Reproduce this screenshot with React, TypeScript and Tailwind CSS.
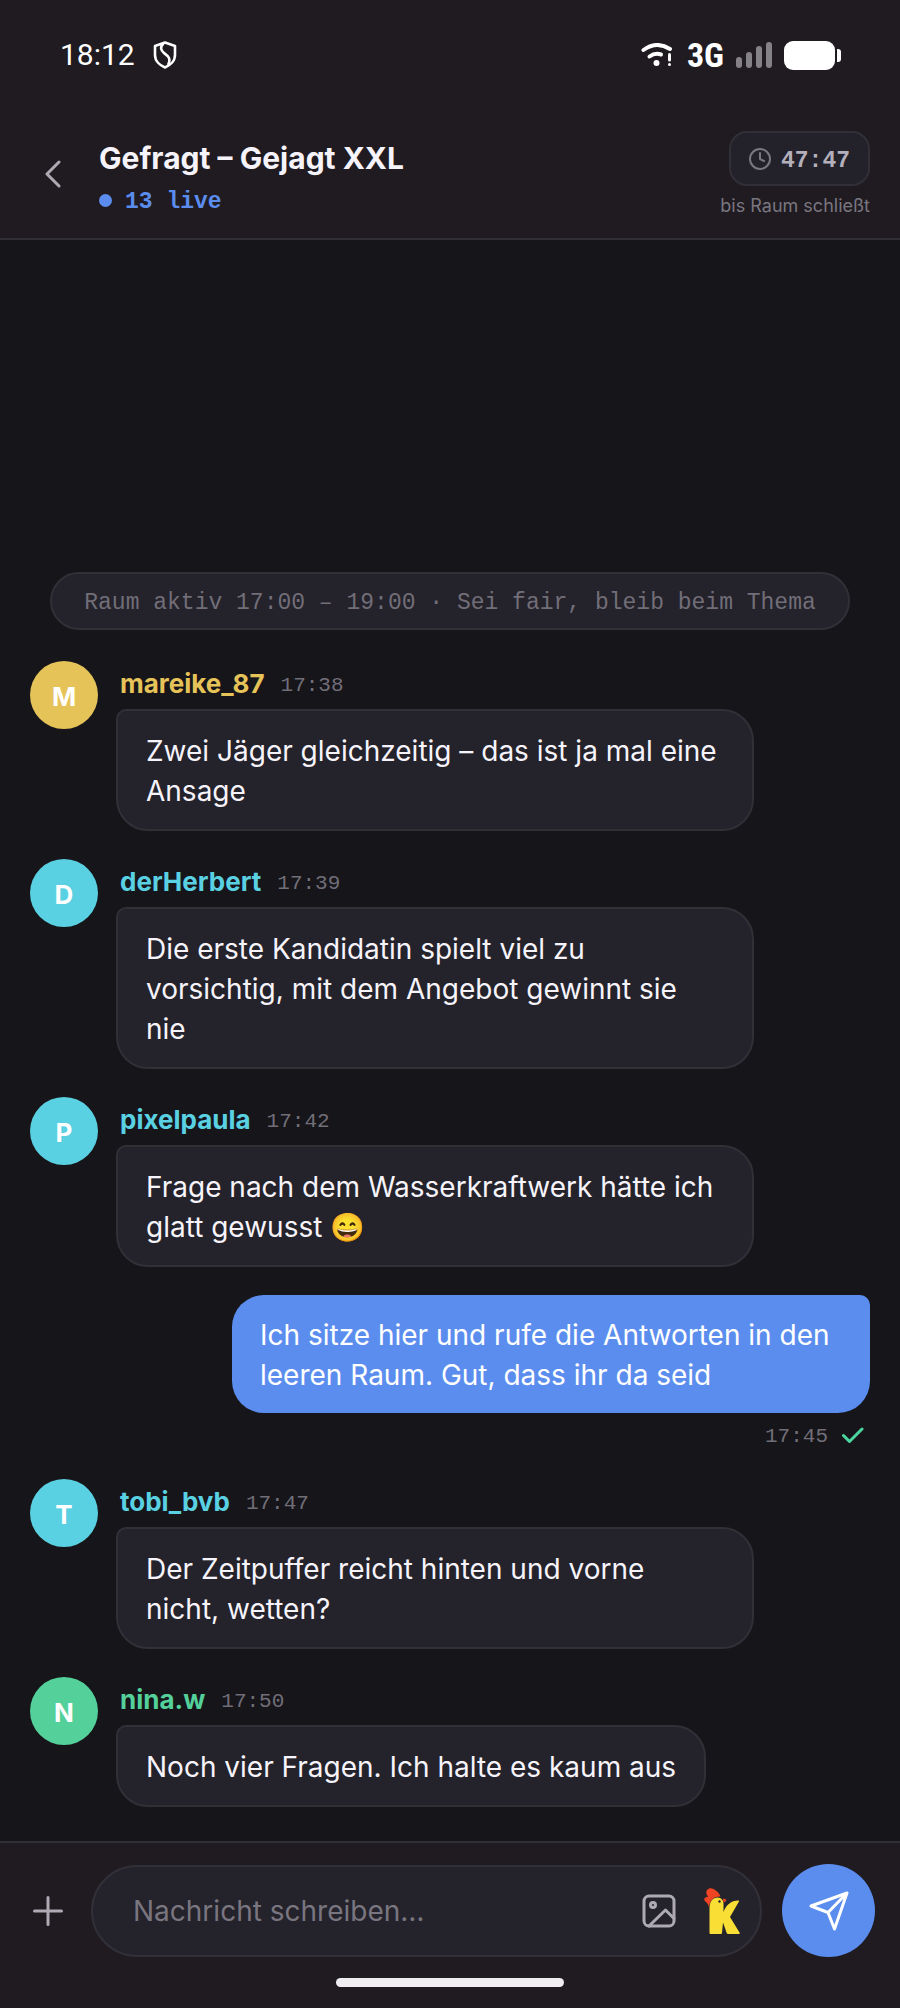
import React from 'react';

type ChatMessage = {
  id: number;
  author?: string;
  time: string;
  text: string;
  avatar?: string;
  name?: string;
};

const messages: ChatMessage[] = [
  { id: 1, author: 'mareike_87', time: '17:38', text: 'Zwei Jäger gleichzeitig – das ist ja mal eine Ansage', avatar: 'bg-[#e6c358]', name: 'text-[#e6c358]' },
  { id: 2, author: 'derHerbert', time: '17:39', text: 'Die erste Kandidatin spielt viel zu vorsichtig, mit dem Angebot gewinnt sie nie', avatar: 'bg-[#5ad1e2]', name: 'text-[#5ad1e2]' },
  { id: 3, author: 'pixelpaula', time: '17:42', text: 'Frage nach dem Wasserkraftwerk hätte ich glatt gewusst 😄', avatar: 'bg-[#5ad1e2]', name: 'text-[#5ad1e2]' },
  { id: 4, time: '17:45', text: 'Ich sitze hier und rufe die Antworten in den leeren Raum. Gut, dass ihr da seid' },
  { id: 5, author: 'tobi_bvb', time: '17:47', text: 'Der Zeitpuffer reicht hinten und vorne nicht, wetten?', avatar: 'bg-[#5ad1e2]', name: 'text-[#5ad1e2]' },
  { id: 6, author: 'nina.w', time: '17:50', text: 'Noch vier Fragen. Ich halte es kaum aus', avatar: 'bg-[#54d09a]', name: 'text-[#54d09a]' },
];

const MONO = "font-['Liberation_Mono',monospace]";

const StatusBar: React.FC = () => (
  <div className="flex h-[110px] items-center justify-between pl-[60px] pr-[59px] text-white">
    <div className="flex items-center gap-[18px]">
      <span className="font-['Roboto',sans-serif] text-[30px] leading-9">18:12</span>
      <svg width="24" height="28" viewBox="0 0 24 28" fill="none" stroke="currentColor" strokeWidth="2.6" strokeLinejoin="round">
        <path d="M12 1.500 L22 5 V14 C22 20 17 24.500 12 26.500 C7 24.500 2 20 2 14 V5 Z" />
        <path d="M10.500 2.500 C6.500 6 8 9.500 11 12 C15 15 18.500 17.500 15 24" />
      </svg>
    </div>
    <div className="flex items-center">
      <svg width="32" height="24" viewBox="0 0 32 24" fill="none" stroke="currentColor" strokeLinecap="round">
        <path d="M2.500 7 Q15.500 -2.500 29 6" strokeWidth="4" />
        <path d="M8.500 13.500 Q14 9.500 20 11.500" strokeWidth="4" />
        <circle cx="15.500" cy="20" r="3" fill="currentColor" stroke="none" />
        <path d="M28.500 11.500 V17" strokeWidth="3" />
        <path d="M28.500 21.500 V21.600" strokeWidth="3" />
      </svg>
      <span className="ml-[14px] font-['Liberation_Sans_Narrow','Roboto_Condensed','Roboto',sans-serif] text-[34px] font-bold leading-9">3G</span>
      <svg className="ml-3" width="36" height="26" viewBox="0 0 36 26" fill="#858287">
        <rect x="0" y="15" width="6" height="11" rx="3" />
        <rect x="10" y="10" width="6" height="16" rx="3" />
        <rect x="20" y="4" width="6" height="22" rx="3" />
        <rect x="30" y="0" width="6" height="26" rx="3" />
      </svg>
      <svg className="ml-3" width="57" height="29" viewBox="0 0 57 29" fill="currentColor">
        <rect width="51" height="29" rx="9" />
        <path d="M53 8 h1 a3 3 0 0 1 3 3 v7 a3 3 0 0 1 -3 3 h-1 Z" />
      </svg>
    </div>
  </div>
);

const RoomHeader: React.FC = () => (
  <header className="flex h-[128px] items-start justify-between px-[30px]">
    <div className="flex">
      <button type="button" aria-label="Zurück" className="mt-[46px] flex h-9 w-[45px] items-center justify-center text-[#aeaab4]">
        <svg width="16" height="28" viewBox="0 0 16 28" fill="none" stroke="currentColor" strokeWidth="3" strokeLinecap="round" strokeLinejoin="round">
          <path d="M14 2 L2 14 L14 26" />
        </svg>
      </button>
      <div className="ml-6 mt-7">
        <h1 className="font-['Inter',sans-serif] text-[30px] font-bold leading-10 text-[#f6f4fa]">Gefragt – Gejagt XXL</h1>
        <p className={`${MONO} mt-1 flex items-center gap-[13px] text-[23px] font-bold leading-8 text-[#5b8dee]`}>
          <span className="h-[13px] w-[13px] rounded-full bg-[#5b8dee]" />
          <span className="pt-1">13 live</span>
        </p>
      </div>
    </div>
    <div className="mt-[21px] flex flex-col items-end">
      <div className="flex h-[55px] items-center gap-[10px] rounded-[18px] border-2 border-[#312f37] bg-[#23222b] px-[18px]">
        <svg width="22" height="22" viewBox="0 0 22 22" fill="none" stroke="#7a7782" strokeWidth="2" strokeLinecap="round" strokeLinejoin="round">
          <circle cx="11" cy="11" r="10" />
          <path d="M11 5 V11 L15 13" />
        </svg>
        <span className={`${MONO} pt-1 text-[23px] font-bold leading-8 text-[#b4b0bb]`}>47:47</span>
      </div>
      <p className="mt-2 font-['Inter',sans-serif] text-[18px] leading-6 text-[#797680]">bis Raum schließt</p>
    </div>
  </header>
);

const Time: React.FC<{ value: string }> = ({ value }) => (
  <time className={`${MONO} pt-[3px] text-[21px] leading-8 text-[#716e78]`}>{value}</time>
);

const OwnMessage: React.FC<{ message: ChatMessage }> = ({ message }) => (
  <li className="flex flex-col items-end">
    <p className="max-w-[638px] rounded-[32px] rounded-tr-[10px] bg-[#5b8dee] px-7 pb-[18px] pt-5 text-[28px] leading-10 text-white">
      {message.text}
    </p>
    <div className="mt-[6px] flex h-8 items-center gap-[14px] pr-[6px]">
      <Time value={message.time} />
      <svg width="22" height="16" viewBox="0 0 22 16" fill="none" stroke="#4bd6a0" strokeWidth="3" strokeLinecap="round" strokeLinejoin="round">
        <path d="M1.500 8.500 L7.500 14.500 L20 2" />
      </svg>
    </div>
  </li>
);

const OtherMessage: React.FC<{ message: ChatMessage }> = ({ message }) => (
  <li className="flex items-start gap-[18px]">
    <div className={`${message.avatar} flex h-[68px] w-[68px] shrink-0 items-center justify-center rounded-full pt-[2px] text-[26px] font-bold text-white`}>
      {message.author?.charAt(0).toUpperCase()}
    </div>
    <div className="flex min-w-0 flex-1 flex-col items-start">
      <div className="flex h-12 items-center gap-4 pb-[2px] pl-1">
        <span className={`${message.name} text-[26px] font-bold leading-8`}>{message.author}</span>
        <Time value={message.time} />
      </div>
      <p className="max-w-[638px] rounded-[32px] rounded-tl-[10px] border-2 border-[#322f37] bg-[#24222b] px-7 pb-[18px] pt-5 text-[28px] leading-10 text-[#f6f4fa]">
        {message.text}
      </p>
    </div>
  </li>
);

const Composer: React.FC = () => (
  <form className="flex items-center px-[25px] pt-[21px]" onSubmit={(e) => e.preventDefault()}>
    <button type="button" aria-label="Anhang hinzufügen" className="flex h-11 w-[46px] items-center justify-center text-[#aeaab4]">
      <svg width="30" height="30" viewBox="0 0 30 30" fill="none" stroke="currentColor" strokeWidth="3" strokeLinecap="round">
        <path d="M15 1.500 V28.500 M1.500 15 H28.500" />
      </svg>
    </button>
    <div className="ml-5 flex h-[92px] min-w-0 flex-1 items-center rounded-full border-2 border-[#312f37] bg-[#24222b] pl-10 pr-5">
      <input
        type="text"
        aria-label="Nachricht schreiben"
        placeholder="Nachricht schreiben…"
        className="min-w-0 flex-1 bg-transparent text-[28px] leading-10 text-[#f6f4fa] outline-none placeholder:text-[#797680]"
      />
      <button type="button" aria-label="Bild senden" className="text-[#aeaab4]">
        <svg width="34" height="34" viewBox="0 0 34 34" fill="none" stroke="currentColor" strokeWidth="3" strokeLinecap="round" strokeLinejoin="round">
          <rect x="2" y="2" width="30" height="30" rx="5" />
          <circle cx="11" cy="11" r="2.500" />
          <path d="M7 32 L23.500 16 L32 24.500" />
        </svg>
      </button>
      <button type="button" aria-label="Klipy" className="ml-7">
        <svg width="36" height="46" viewBox="0 0 36 46">
          <path d="M6.500 46 Q5.500 46 5.500 45 V20 C5.500 13.500 9 9.500 13.500 9.500 C17.500 9.500 19.500 12.500 19.500 16 V24 C22 17 27 12.500 34.500 12.500 Q35.500 12.500 35 13.500 L26 29 L35.800 45 Q36 46 35 46 H24 Q23 46 22.700 45 L19 34.500 L18 45 Q18 46 17 46 Z" fill="#f8de35" />
          <path d="M4.800 19 C4.500 16.500 3 14.500 0.800 13 C-0.500 11 0.500 8.500 4 9 C2.500 6 1.500 5 3 2 C5 -0.500 8 0 9.500 1 C13 3 15.500 5 16.500 8.500 C11.500 8 6.500 10.500 4.800 19 Z" fill="#ee4423" />
          <path d="M19 10.500 Q21.500 10.500 22.500 12 Q21.500 14 19.500 14.500 Z" fill="#ee4423" />
          <circle cx="15.500" cy="13.500" r="1.200" fill="#24222b" />
        </svg>
      </button>
    </div>
    <button type="submit" aria-label="Senden" className="ml-5 flex h-[93px] w-[93px] shrink-0 items-center justify-center rounded-full bg-[#5b8dee] text-white">
      <svg width="40" height="40" viewBox="0 0 40 40" fill="none" stroke="currentColor" strokeWidth="3" strokeLinecap="round" strokeLinejoin="round">
        <path d="M38 2 L2 15 L19 21.500 L25.500 38 Z M38 2 L19 21.500" />
      </svg>
    </button>
  </form>
);

export const App: React.FC = () => {
  return (
    <div className="flex min-h-screen flex-col bg-[#16151a] font-['Inter',sans-serif]">
      {/* Status bar + room header */}
      <div className="border-b-2 border-[#312f36] bg-[#1f1b20]">
        <StatusBar />
        <RoomHeader />
      </div>

      {/* Conversation */}
      <main className="flex flex-1 flex-col justify-end px-[30px] pb-[34px]">
        <div className={`${MONO} mx-5 mb-[31px] flex h-[58px] items-center justify-center rounded-full border-2 border-[#322f37] bg-[#24222b] pt-[3px] text-[23px] leading-8 text-[#716e78]`}>
          Raum aktiv 17:00 – 19:00 · Sei fair, bleib beim Thema
        </div>
        <ul className="flex flex-col gap-7">
          {messages.map((message) =>
            message.author ? (
              <OtherMessage key={message.id} message={message} />
            ) : (
              <OwnMessage key={message.id} message={message} />
            )
          )}
        </ul>
      </main>

      {/* Composer */}
      <footer className="border-t-2 border-[#312f36] bg-[#1f1b20] pb-[21px]">
        <Composer />
        <div className="mx-auto mt-[21px] h-[9px] w-[228px] rounded-full bg-[#efedf0]" />
      </footer>
    </div>
  );
};

export default App;
